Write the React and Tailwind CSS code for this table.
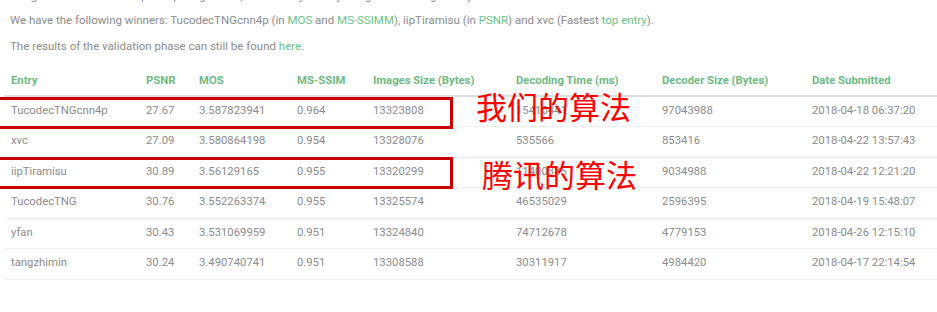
const headers = [
  'Entry',
  'PSNR',
  'MOS',
  'MS-SSIM',
  'Images Size (Bytes)',
  'Decoding Time (ms)',
  'Decoder Size (Bytes)',
  'Date Submitted',
]

// column widths measured from the screenshot
const widths = [135, 53, 98, 76, 143, 146, 150, 132]

const rows = [
  ['TucodecTNGcnn4p', '27.67', '3.587823941', '0.964', '13323808', '15410441', '97043988', '2018-04-18 06:37:20'],
  ['xvc', '27.09', '3.580864198', '0.954', '13328076', '535566', '853416', '2018-04-22 13:57:43'],
  ['iipTiramisu', '30.89', '3.56129165', '0.955', '13320299', '11400385', '9034988', '2018-04-22 12:21:20'],
  ['TucodecTNG', '30.76', '3.552263374', '0.955', '13325574', '46535029', '2596395', '2018-04-19 15:48:07'],
  ['yfan', '30.43', '3.531069959', '0.951', '13324840', '74712678', '4779153', '2018-04-26 12:15:10'],
  ['tangzhimin', '30.24', '3.490740741', '0.951', '13308588', '30311917', '4984420', '2018-04-17 22:14:54'],
]

function Link({ children }) {
  return <a className="text-[#6cc287]">{children}</a>
}

export default function App() {
  return (
    <div className="relative w-[937px] h-[312px] overflow-hidden bg-white font-['Roboto',sans-serif] text-[#8c8c8c]">
      {/* Text above the table */}
      <div className="pl-[10px] text-[11.5px] leading-[26px]">
        <p className="-mt-[15px] leading-[22px] whitespace-nowrap">
          Congratulations to all the participating teams, and thank you for joining the challenge this year.
        </p>
        <p className="whitespace-nowrap">
          We have the following winners: TucodecTNGcnn4p (in <Link>MOS</Link> and <Link>MS-SSIMM</Link>), iipTiramisu (in{' '}
          <Link>PSNR</Link>) and xvc (Fastest <Link>top entry</Link>).
        </p>
        <p className="whitespace-nowrap">
          The results of the validation phase can still be found <Link>here</Link>.
        </p>
      </div>

      {/* Leaderboard */}
      <table className="mt-[9px] ml-[4px] w-[933px] table-fixed border-collapse text-[11.3px]">
        <colgroup>
          {widths.map((w, i) => (
            <col key={i} style={{ width: w }} />
          ))}
        </colgroup>
        <thead>
          <tr className="h-[28px] border-b-2 border-[#dedede]">
            {headers.map((h) => (
              <th key={h} className="pl-[7px] text-left font-bold text-[#6dbb82] whitespace-nowrap">
                {h}
              </th>
            ))}
          </tr>
        </thead>
        <tbody>
          {rows.map((r) => (
            <tr key={r[0]} className="h-[30.5px] border-b border-[#efefef]">
              {r.map((c, i) => (
                <td key={i} className="pl-[7px] whitespace-nowrap">
                  {c}
                </td>
              ))}
            </tr>
          ))}
        </tbody>
      </table>

      {/* Annotations */}
      <div className="absolute left-[-3px] top-[97px] w-[456px] h-[32px] border-[3px] border-[#c80000]" />
      <div className="absolute left-[-3px] top-[157px] w-[456px] h-[32px] border-[3px] border-[#c80000]" />
      <div className="absolute left-[476px] top-[90px] text-[31px] leading-none text-[#ff0000] font-['Noto_Sans_CJK_SC',sans-serif]">
        我们的算法
      </div>
      <div className="absolute left-[482px] top-[158px] text-[31px] leading-none text-[#ff0000] font-['Noto_Sans_CJK_SC',sans-serif]">
        腾讯的算法
      </div>
    </div>
  )
}
